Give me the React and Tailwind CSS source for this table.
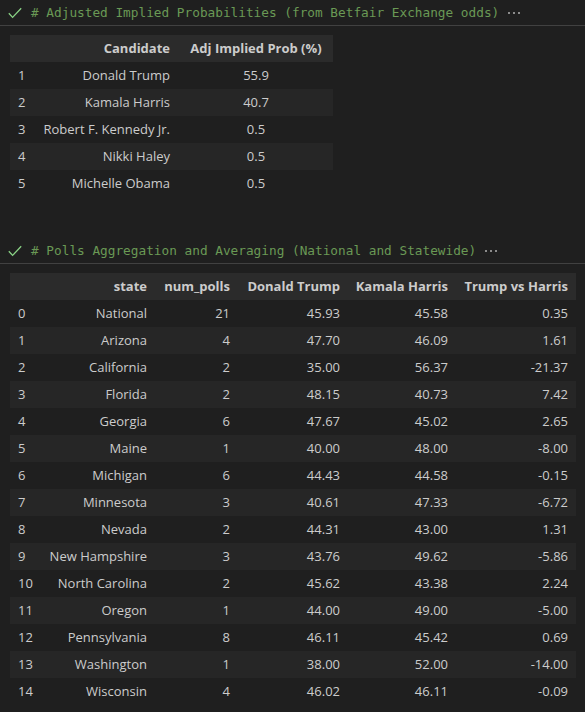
import React from 'react'

const candidates = [
    ["1", "Donald Trump", "55.9"],
    ["2", "Kamala Harris", "40.7"],
    ["3", "Robert F. Kennedy Jr.", "0.5"],
    ["4", "Nikki Haley", "0.5"],
    ["5", "Michelle Obama", "0.5"],
]

const polls = [
    ["0", "National", "21", "45.93", "45.58", "0.35"],
    ["1", "Arizona", "4", "47.70", "46.09", "1.61"],
    ["2", "California", "2", "35.00", "56.37", "-21.37"],
    ["3", "Florida", "2", "48.15", "40.73", "7.42"],
    ["4", "Georgia", "6", "47.67", "45.02", "2.65"],
    ["5", "Maine", "1", "40.00", "48.00", "-8.00"],
    ["6", "Michigan", "6", "44.43", "44.58", "-0.15"],
    ["7", "Minnesota", "3", "40.61", "47.33", "-6.72"],
    ["8", "Nevada", "2", "44.31", "43.00", "1.31"],
    ["9", "New Hampshire", "3", "43.76", "49.62", "-5.86"],
    ["10", "North Carolina", "2", "45.62", "43.38", "2.24"],
    ["11", "Oregon", "1", "44.00", "49.00", "-5.00"],
    ["12", "Pennsylvania", "8", "46.11", "45.42", "0.69"],
    ["13", "Washington", "1", "38.00", "52.00", "-14.00"],
    ["14", "Wisconsin", "4", "46.02", "46.11", "-0.09"],
]

// collapsed code cell: check mark, first comment line, "..." marker
const CellHeader = ({ title }) => {
    return (
        <div>
            <div className="flex h-[25px] items-center pl-2">
                <svg width="14" height="12" viewBox="0 0 14 12" className="mr-[9px] shrink-0">
                    <path d="M0.8 6.2 L4.6 10.4 L13.2 1.2" stroke="#89d185" strokeWidth="1.3" fill="none" />
                </svg>
                <span className="whitespace-pre font-['DejaVu_Sans_Mono',monospace] text-[12.75px] text-[#6a9955]">{title}</span>
                <svg width="14" height="4" viewBox="0 0 14 4" className="ml-[8px] mt-[1px] shrink-0">
                    <rect x="1" y="1" width="2" height="2" fill="#8b8b8b" />
                    <rect x="6" y="1" width="2" height="2" fill="#8b8b8b" />
                    <rect x="11" y="1" width="2" height="2" fill="#8b8b8b" />
                </svg>
            </div>
            <div className="h-px w-full bg-[#414141]"></div>
        </div>
    )
}

const App = () => {
    return (
        <div className="min-h-screen w-full overflow-hidden bg-[#1f1f1f] font-['Open_Sans',sans-serif] text-[13px] text-[#cccccc]">
            <CellHeader title="# Adjusted Implied Probabilities (from Betfair Exchange odds)" />
            <table className="ml-[10px] mt-[9px] table-fixed border-collapse">
                <colgroup>
                    <col className="w-[24px]" />
                    <col className="w-[145px]" />
                    <col className="w-[154px]" />
                </colgroup>
                <thead>
                    <tr className="h-[27px] bg-[#2b2b2b] font-bold">
                        <th className="p-0"></th>
                        <th className="p-0 pr-[9px] text-right">Candidate</th>
                        <th className="p-0 text-center">Adj Implied Prob (%)</th>
                    </tr>
                </thead>
                <tbody>
                    {candidates.map((row) => {
                        return (
                            <tr key={row[0]} className="h-[27px] even:bg-[#262626]">
                                <td className="p-0 pl-2 text-left">{row[0]}</td>
                                <td className="whitespace-nowrap p-0 pr-[9px] text-right">{row[1]}</td>
                                <td className="p-0 text-center">{row[2]}</td>
                            </tr>
                        )
                    })}
                </tbody>
            </table>

            <div className="mt-[41px]">
                <CellHeader title="# Polls Aggregation and Averaging (National and Statewide)" />
            </div>
            <table className="ml-[10px] mt-[9px] w-[566px] table-fixed border-collapse">
                <colgroup>
                    <col className="w-[32px]" />
                    <col className="w-[114px]" />
                    <col className="w-[83px]" />
                    <col className="w-[110px]" />
                    <col className="w-[108px]" />
                    <col className="w-[119px]" />
                </colgroup>
                <thead>
                    <tr className="h-[27px] bg-[#2b2b2b] font-bold">
                        <th className="p-0"></th>
                        <th className="p-0 pr-[9px] text-right">state</th>
                        <th className="p-0 pr-[9px] text-right">num_polls</th>
                        <th className="whitespace-nowrap p-0 pr-[9px] text-right">Donald Trump</th>
                        <th className="whitespace-nowrap p-0 pr-[9px] text-right">Kamala Harris</th>
                        <th className="whitespace-nowrap p-0 pr-2 text-right">Trump vs Harris</th>
                    </tr>
                </thead>
                <tbody>
                    {polls.map((row) => {
                        return (
                            <tr key={row[0]} className="h-[27px] even:bg-[#262626]">
                                <td className="p-0 pl-2 text-left">{row[0]}</td>
                                <td className="whitespace-nowrap p-0 pr-[9px] text-right">{row[1]}</td>
                                <td className="p-0 pr-[9px] text-right">{row[2]}</td>
                                <td className="p-0 pr-[9px] text-right">{row[3]}</td>
                                <td className="p-0 pr-[9px] text-right">{row[4]}</td>
                                <td className="p-0 pr-2 text-right">{row[5]}</td>
                            </tr>
                        )
                    })}
                </tbody>
            </table>
        </div>
    )
}

export default App
